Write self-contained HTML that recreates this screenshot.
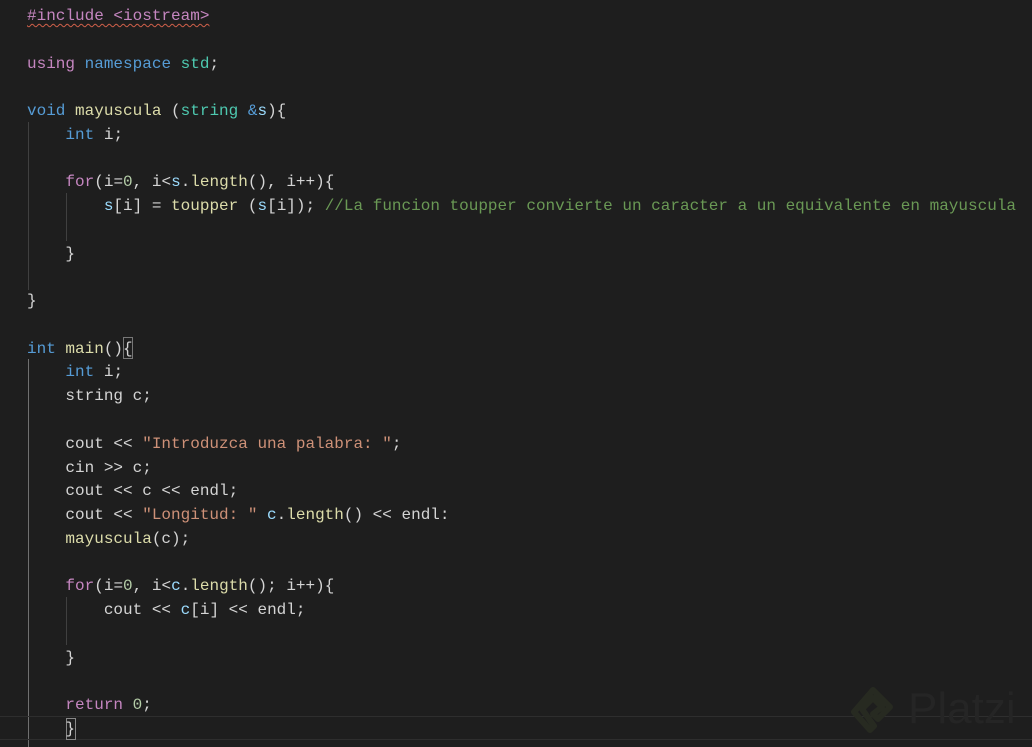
<!DOCTYPE html>
<html><head><meta charset="utf-8"><style>
html,body{margin:0;padding:0;background:#1e1e1e;width:1032px;height:747px;overflow:hidden}
.c{position:absolute;left:27px;top:5px;font-family:"Liberation Mono",monospace;font-size:16px;line-height:23.77px;color:#d4d4d4;white-space:pre}
.k{color:#569cd6}.p{color:#c586c0}.f{color:#dcdcaa}.t{color:#4ec9b0}.v{color:#9cdcfe}.s{color:#ce9178}.n{color:#b5cea8}.m{color:#6a9955}.w{color:#d4d4d4}
.g{position:absolute;width:1px;background:#404040}
.sq{text-decoration:underline wavy #d0604a;text-decoration-thickness:1px;text-underline-offset:3px}
</style></head><body>
<div class="g" style="left:28px;top:122px;height:168px"></div>
<div class="g" style="left:28px;top:359px;height:388px;background:#707070"></div>
<div class="g" style="left:66px;top:193px;height:48px"></div>
<div class="g" style="left:66px;top:597px;height:48px"></div>
<div style="position:absolute;left:0;top:716px;width:1032px;height:24px;border-top:1px solid #2e2e2e;border-bottom:1px solid #2e2e2e;box-sizing:border-box"></div>
<div style="position:absolute;left:66px;top:718px;width:10px;height:22px;border:1px solid #888;box-sizing:border-box"></div>
<div style="position:absolute;left:123px;top:337px;width:10px;height:22px;border:1px solid #777;box-sizing:border-box"></div>
<div class="c"><span class="p sq">#include &lt;iostream&gt;</span>

<span class="p">using</span> <span class="k">namespace</span> <span class="t">std</span>;

<span class="k">void</span> <span class="f">mayuscula</span> (<span class="t">string</span> <span class="k">&amp;</span><span class="v">s</span>){
    <span class="k">int</span> <span class="w">i</span>;

    <span class="p">for</span>(<span class="w">i</span>=<span class="n">0</span>, <span class="w">i</span>&lt;<span class="v">s</span>.<span class="f">length</span>(), <span class="w">i</span>++){
        <span class="v">s</span>[<span class="w">i</span>] = <span class="f">toupper</span> (<span class="v">s</span>[<span class="w">i</span>]); <span class="m">//La funcion toupper convierte un caracter a un equivalente en mayuscula</span>

    }

}

<span class="k">int</span> <span class="f">main</span>(){
    <span class="k">int</span> <span class="w">i</span>;
    string c;

    cout &lt;&lt; <span class="s">"Introduzca una palabra: "</span>;
    cin &gt;&gt; c;
    cout &lt;&lt; c &lt;&lt; endl;
    cout &lt;&lt; <span class="s">"Longitud: "</span> <span class="v">c</span>.<span class="f">length</span>() &lt;&lt; endl:
    <span class="f">mayuscula</span>(c);

    <span class="p">for</span>(<span class="w">i</span>=<span class="n">0</span>, <span class="w">i</span>&lt;<span class="v">c</span>.<span class="f">length</span>(); <span class="w">i</span>++){
        cout &lt;&lt; <span class="v">c</span>[<span class="w">i</span>] &lt;&lt; endl;

    }

    <span class="p">return</span> <span class="n">0</span>;
    }</div>
<svg style="position:absolute;left:848px;top:682px" width="50" height="60"><path d="M25 8 L42 25 L30 37 L25 32 L34 25 L25 16 L14 27 L26 44 L22 48 L6 30 Z" fill="none" stroke="#272a21" stroke-width="6" stroke-linejoin="round"/></svg>
<div style="position:absolute;left:908px;top:684px;font-family:'Liberation Sans',sans-serif;font-size:44px;color:#252525">Platzi</div>
</body></html>
